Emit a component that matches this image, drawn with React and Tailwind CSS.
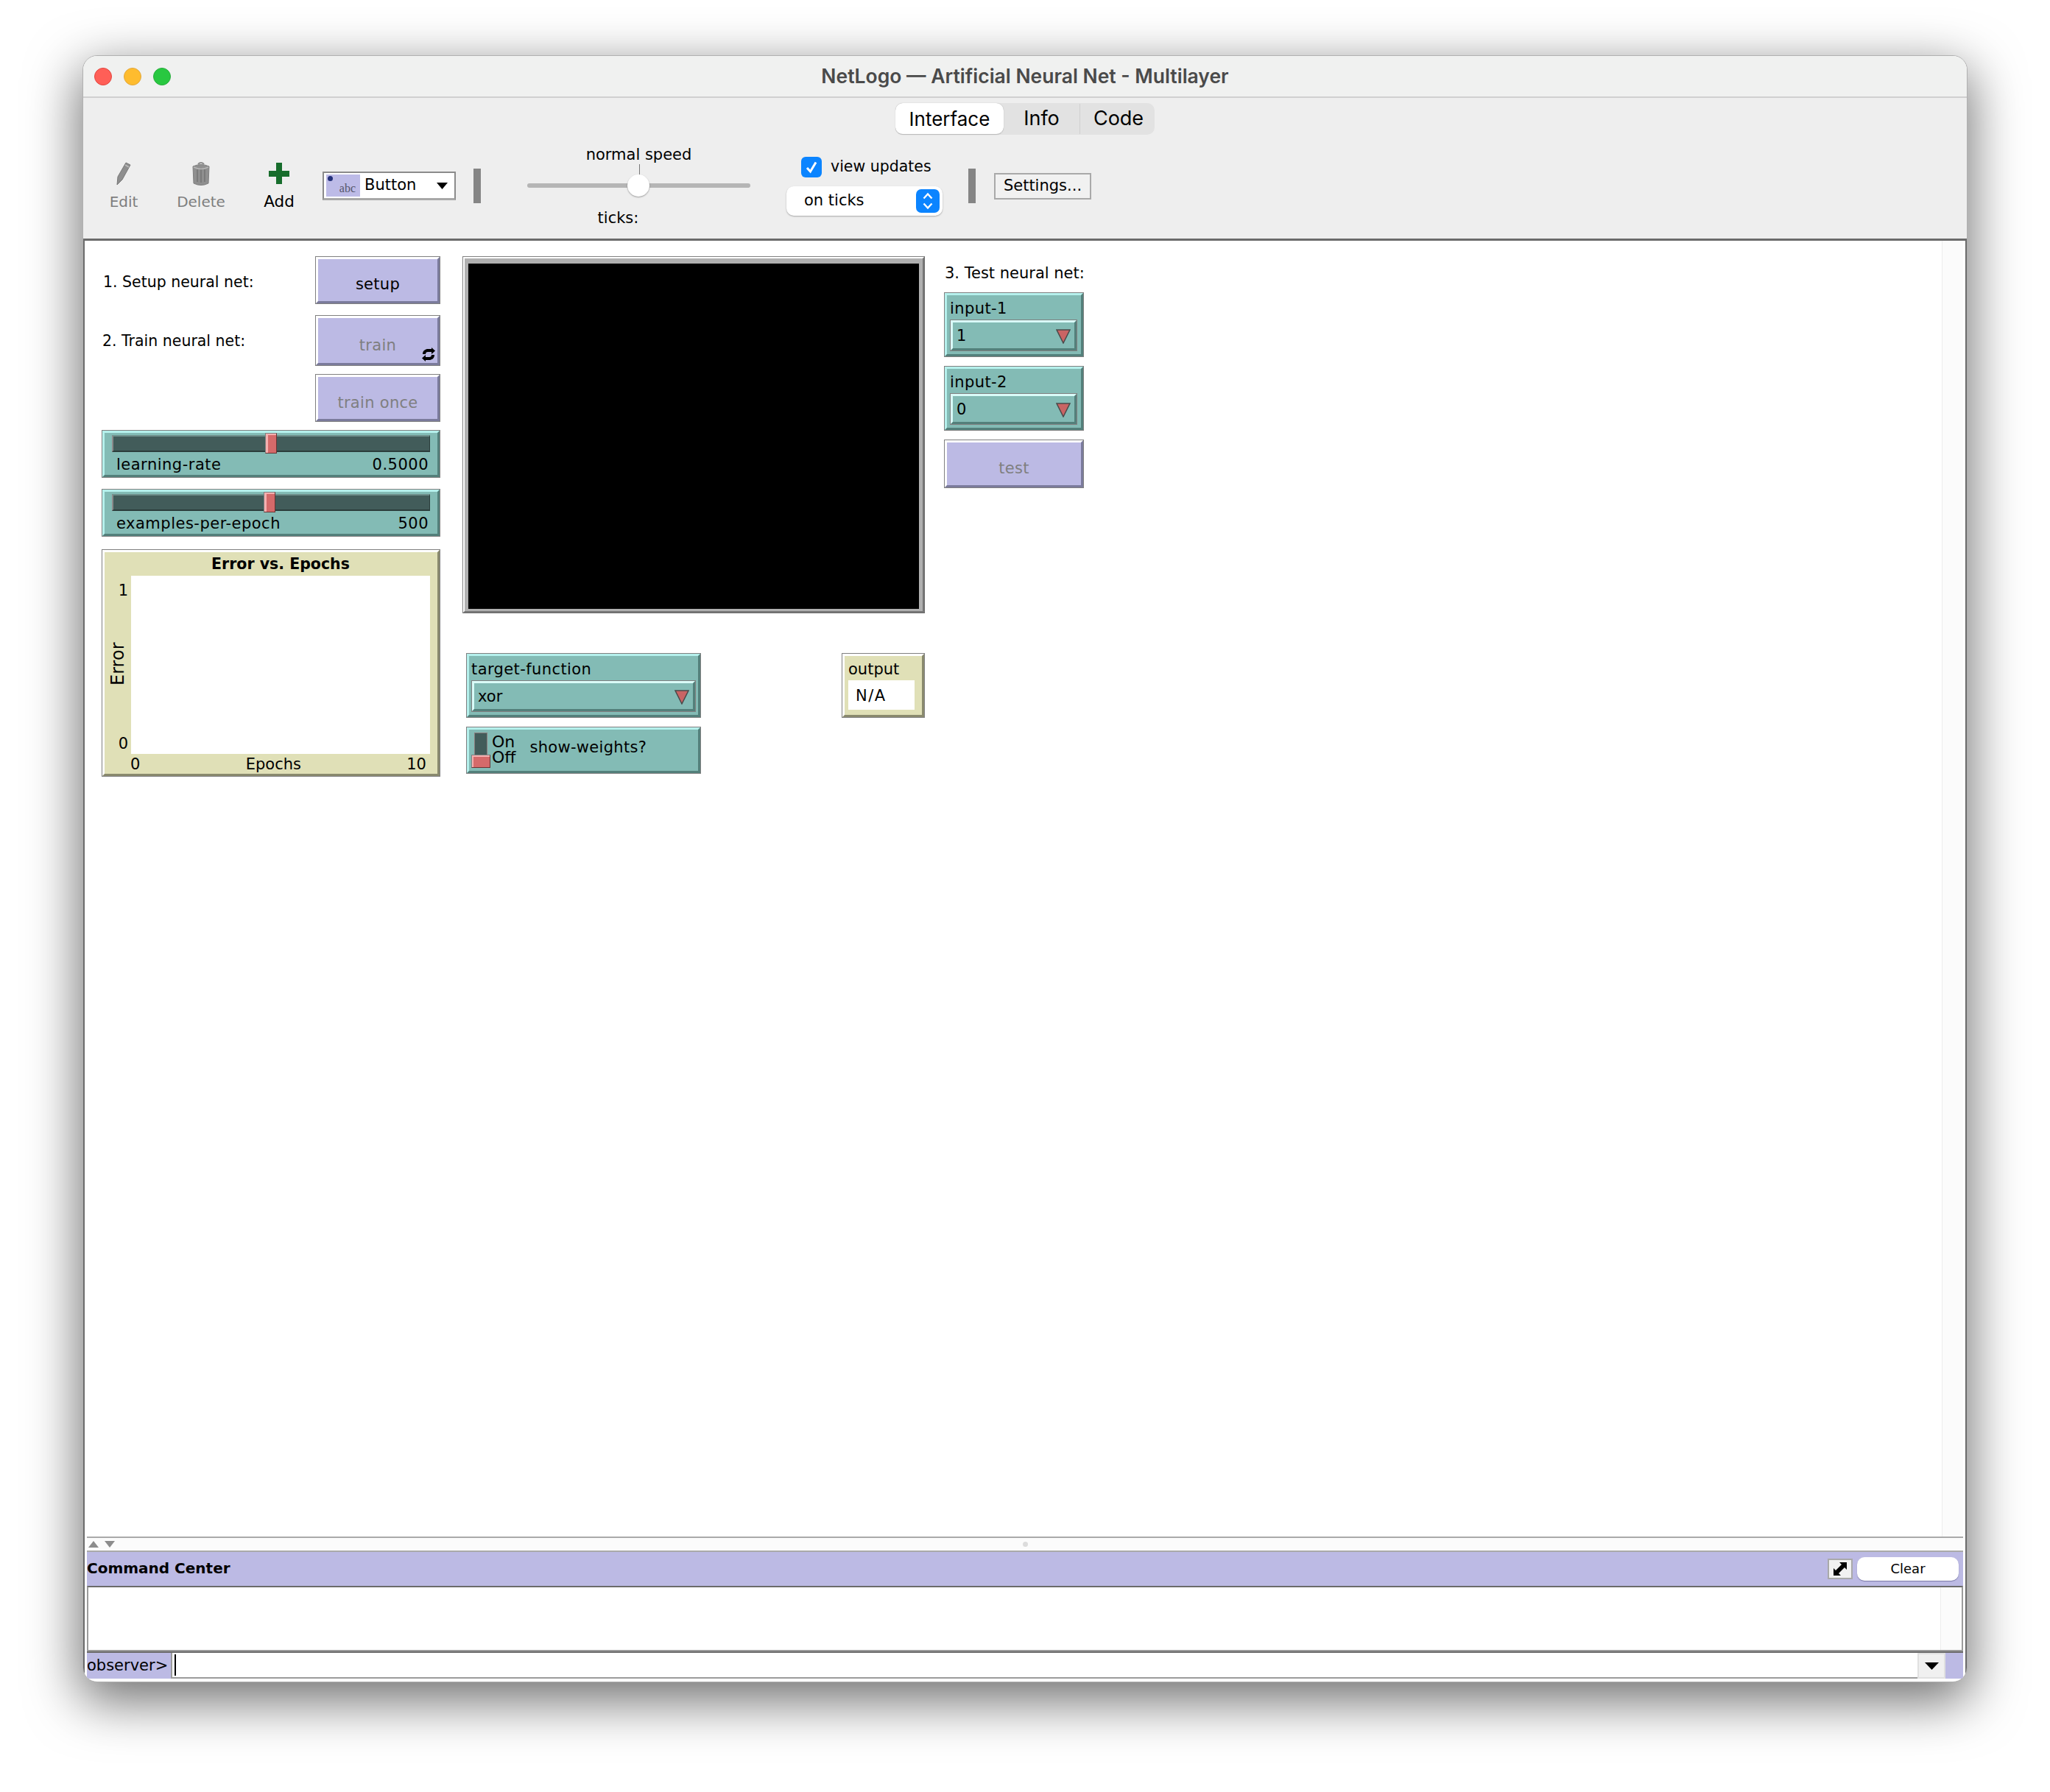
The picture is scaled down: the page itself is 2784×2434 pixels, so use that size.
import React from "react";

const ui = "font-['DejaVu_Sans',sans-serif]";
const mac = "font-['Inter',sans-serif]";

// NetLogo widgets all share the same 1px outline + 3px bevel
const Bevel = ({ className = "", light, dark, bg, children }) => (
  <div className={`absolute border border-[#808080] ${className}`}>
    <div className={`flex h-full w-full flex-col border-[3px] ${light} ${dark} ${bg}`}>{children}</div>
  </div>
);

const Button = ({ className, label, disabled, textClass = "", children }) => (
  <Bevel
    className={className}
    light="border-t-white border-l-white"
    dark="border-r-[#7b7b9c] border-b-[#7b7b9c]"
    bg="bg-[#bcbae4]"
  >
    <div className={`relative flex flex-1 items-center justify-center text-[21px] tracking-[0.3px] ${textClass} ${disabled ? "text-[#7f7f80]" : "text-black"}`}>
      {label}
      {children}
    </div>
  </Bevel>
);

const Slider = ({ className, label, value, thumbClass }) => (
  <Bevel
    className={className}
    light="border-t-[#b5f0ec] border-l-[#b5f0ec]"
    dark="border-r-[#53807b] border-b-[#53807b]"
    bg="bg-[#83bbb5]"
  >
    <div className="relative mx-[10px] mt-[3px] h-[23px] border-t-2 border-l-2 border-b-2 border-r border-t-[#6f8f8b] border-l-[#8b8b8b] border-b-[#2b3d3b] border-r-[#2b3d3b] bg-[#425c5a]">
      <div className={`absolute top-[-5px] h-[28px] w-[16px] border border-[#7f7f7f] border-r-[#6a3434] border-b-[#6a3434] bg-[#d56a6a] shadow-[inset_3px_2px_0_#f4b0b0] ${thumbClass}`} />
    </div>
    <div className="mt-[4px] flex justify-between pl-[16px] pr-[12px] text-[21px] leading-[26px] tracking-[0.5px] text-black">
      <span>{label}</span>
      <span>{value}</span>
    </div>
  </Bevel>
);

const Chooser = ({ className, label, value, padClass = "pl-[4px]", innerClass }) => (
  <Bevel
    className={className}
    light="border-t-[#b5f0ec] border-l-[#b5f0ec]"
    dark="border-r-[#53807b] border-b-[#53807b]"
    bg="bg-[#83bbb5]"
  >
    <div className={`h-[33px] text-[21px] leading-[36px] tracking-[0.4px] text-black ${padClass}`}>{label}</div>
    <div className={`h-[43px] border border-[#808080] ${innerClass}`}>
      <div className="flex h-full items-center justify-between border-[3px] border-t-[#d9fbf8] border-l-[#d9fbf8] border-r-[#53807b] border-b-[#53807b] pl-[5px] pr-[5px] pt-[2px] text-[21px] text-black">
        <span>{value}</span>
        <svg width="20" height="20" viewBox="0 0 20 20">
          <polygon points="1,1 19,1 10,19" fill="#c96464" stroke="#4a4a4a" strokeWidth="1.5" />
        </svg>
      </div>
    </div>
  </Bevel>
);

const Separator = ({ className }) => <div className={`h-[47px] w-[10px] bg-[#858585] ${className}`} />;

const PencilIcon = () => (
  <svg width="20" height="32" viewBox="0 0 20 32">
    <path d="M13 1 L19 4 L8 24 L1 31 L2 20 Z" fill="#8e8e8e" stroke="#777" strokeWidth="1" />
    <path d="M12 4 L17 7" stroke="#bbb" strokeWidth="1.5" />
  </svg>
);

const TrashIcon = () => (
  <svg width="24" height="32" viewBox="0 0 24 32">
    <path d="M8 3 Q12 -1 16 3" fill="none" stroke="#8a8a8a" strokeWidth="2" />
    <path d="M1 6 Q12 1 23 6 L22 29 Q12 34 2 29 Z" fill="#8f8f8f" stroke="#808080" />
    <path d="M7 10V27M12 10V28M17 10V27" stroke="#737373" strokeWidth="1.5" />
    <path d="M2 7 Q12 12 22 7" fill="none" stroke="#b4b4b4" strokeWidth="1.5" />
  </svg>
);

// the two curled arrows in the corner of a forever button
const ForeverIcon = () => (
  <svg className="absolute left-[141px] top-[40px]" width="18" height="19" viewBox="0 0 18 19">
    <path d="M1 9C1 4 5 2 8 2H13V0L18 4.5L13 9V6H8C6 6 5 7 5 9Z" fill="#000" />
    <path d="M17 10C17 15 13 17 10 17H5V19L0 14.5L5 10V13H10C12 13 13 12 13 10Z" fill="#000" />
  </svg>
);

const App = () => {
  return (
    <div className="min-h-screen bg-white pl-[112px] pt-[75px]">
      <div className={`flex h-[2210px] w-[2560px] flex-col overflow-hidden rounded-[20px] border border-[#b0b0b0] bg-white shadow-[0_22px_70px_4px_rgba(0,0,0,0.56)] ${ui}`}>
        {/* Title bar */}
        <div className="relative flex h-[57px] shrink-0 items-center justify-center border-b-2 border-[#d0d0d0] bg-[#f0f1f0]">
          <div className="absolute left-[15px] top-[16px] flex gap-[16px]">
            <div className="h-[24px] w-[24px] rounded-full border border-[#e2463f] bg-[#ff5f57]" />
            <div className="h-[24px] w-[24px] rounded-full border border-[#e1a73e] bg-[#febc2e]" />
            <div className="h-[24px] w-[24px] rounded-full border border-[#2aac3e] bg-[#28c840]" />
          </div>
          <span className={`text-[26.5px] font-semibold text-[#4a4a4a] ${mac}`}>NetLogo — Artificial Neural Net - Multilayer</span>
        </div>

        {/* Toolbar */}
        <div className="flex h-[191px] shrink-0 flex-col bg-[#eeeeee]">
          <div className="flex justify-center pt-[7px]">
            <div className={`flex h-[43px] w-[352px] items-center rounded-[10px] bg-[#e2e2e2] text-[26px] text-black ${mac}`}>
              <div className="flex h-full w-[147px] items-center justify-center rounded-[10px] border-b border-[#bdbdbd] bg-white shadow-[0_0_1px_#999]">Interface</div>
              <div className="w-[104px] border-r border-[#d0d0d0] text-center text-[27px]">Info</div>
              <div className="flex-1 pl-[3px] text-center text-[27px]">Code</div>
            </div>
          </div>

          <div className="flex flex-1 items-center pb-[2px] pl-[15px] text-[20px]">
            <div className="flex w-[80px] flex-col items-center gap-[10px] text-[#7e7e7e]">
              <PencilIcon />
              <span className="leading-[24px]">Edit</span>
            </div>
            <div className="ml-[25px] flex w-[80px] flex-col items-center gap-[10px] text-[#7e7e7e]">
              <TrashIcon />
              <span className="leading-[24px]">Delete</span>
            </div>
            <div className="ml-[26px] flex w-[80px] flex-col items-center gap-[10px] text-black">
              <svg width="28" height="32" viewBox="0 0 28 32">
                <path d="M10 3H18V14H28V22H18V32H10V22H0V14H10Z" fill="#176d2c" transform="translate(0 -2)" />
              </svg>
              <span className="text-[21.5px] leading-[24px]">Add</span>
            </div>

            <div className="ml-[19px] flex h-[39px] w-[181px] items-center border-2 border-[#8b8b8b] border-b-[3px] border-b-[#a8a8a8] bg-white pl-[3px] text-[21px] text-black">
              <div className="relative flex h-[30px] w-[46px] items-end justify-end bg-[#bdbbe7] pr-[6px]">
                <div className="absolute left-[2px] top-[2px] h-[7px] w-[7px] rounded-full bg-[#23307a]" />
                <span className="font-['Liberation_Serif',serif] text-[16px] leading-[22px] text-[#55556a]">abc</span>
              </div>
              <span className="ml-[6px] flex-1">Button</span>
              <svg className="mr-[9px]" width="15" height="9" viewBox="0 0 15 9">
                <polygon points="0,0 15,0 7.5,9" fill="#000" />
              </svg>
            </div>

            <Separator className="ml-[24px]" />

            {/* Speed slider */}
            <div className="ml-[63px] flex w-[303px] flex-col items-center text-[21px] text-black">
              <span className="h-[26px] leading-[26px]">normal speed</span>
              <div className="ml-[1px] h-[14px] w-[1px] bg-[#777]" />
              <div className="relative h-[30px] w-full">
                <div className="absolute left-0 right-0 top-[12px] h-[6px] rounded-full bg-[#b5b5b5]" />
                <div className="absolute left-[136px] top-0 h-[30px] w-[30px] rounded-full bg-white shadow-[0_1px_2px_rgba(0,0,0,0.35)]" />
              </div>
              <span className="mr-[56px] mt-[16px] h-[26px] leading-[26px]">ticks:</span>
            </div>

            {/* View updates */}
            <div className="ml-[49px] flex w-[212px] flex-col text-[21px] text-black">
              <div className="ml-[20px] flex h-[28px] items-center gap-[12px]">
                <div className="flex h-[28px] w-[28px] items-center justify-center rounded-[6px] bg-[#0b84ff]">
                  <svg width="20" height="20" viewBox="0 0 20 20">
                    <path d="M4 11L8.5 16L16 3.5" fill="none" stroke="#fff" strokeWidth="3" />
                  </svg>
                </div>
                <span className="text-[20.5px]">view updates</span>
              </div>
              <div className="mt-[12px] flex h-[40px] items-center justify-between rounded-[10px] bg-white pl-[24px] pr-[4px] shadow-[0_1px_2px_rgba(0,0,0,0.3)]">
                <span>on ticks</span>
                <div className="flex h-[32px] w-[32px] items-center justify-center rounded-[7px] bg-[#0b84ff]">
                  <svg width="16" height="26" viewBox="0 0 16 26">
                    <path d="M2.5 9.5L8 3.5L13.5 9.5M2.5 16.5L8 22.5L13.5 16.5" fill="none" stroke="#fff" strokeWidth="2.4" />
                  </svg>
                </div>
              </div>
            </div>

            <Separator className="ml-[35px]" />

            <div className="ml-[25px] flex h-[36px] w-[132px] items-center justify-center border-2 border-[#a9a9a9] bg-[#f1f1f1] text-[21px] text-black">Settings...</div>
          </div>
        </div>

        {/* Everything under the toolbar */}
        <div className="flex min-h-0 flex-1 flex-col border-x-2 border-t-[3px] border-[#6b6b6b]">
          <div className="relative h-[1760px] shrink-0 bg-white text-black">
            <div className="absolute bottom-0 right-[3px] top-0 w-[29px] border-l border-[#ececec] bg-[#fbfbfb]" />

            <div className="absolute left-[25px] top-[41px] text-[20.5px] leading-[30px]">1. Setup neural net:</div>
            <div className="absolute left-[24px] top-[121px] text-[20.5px] leading-[30px]">2. Train neural net:</div>
            <div className="absolute left-[1168px] top-[29px] text-[21px] leading-[30px]">3. Test neural net:</div>

            <Button className="left-[313px] top-[21px] h-[65px] w-[170px]" label="setup" textClass="pt-[12px]" />
            <Button className="left-[313px] top-[101px] h-[69px] w-[170px]" label="train" disabled textClass="pt-[14px]">
              <ForeverIcon />
            </Button>
            <Button className="left-[313px] top-[181px] h-[65px] w-[170px]" label="train once" disabled textClass="pt-[14px]" />

            <Slider className="left-[23px] top-[257px] h-[65px] w-[460px]" label="learning-rate" value="0.5000" thumbClass="left-[206px]" />
            <Slider className="left-[23px] top-[337px] h-[65px] w-[460px]" label="examples-per-epoch" value="500" thumbClass="left-[204px]" />

            {/* Plot */}
            <Bevel
              className="left-[23px] top-[419px] h-[309px] w-[460px]"
              light="border-t-white border-l-white"
              dark="border-r-[#8a8a6e] border-b-[#8a8a6e]"
              bg="bg-[#e0e0b7]"
            >
              <div className="grid h-full grid-cols-[36px_406px_1fr] grid-rows-[32px_242px_1fr] text-[21px] leading-[26px]">
                <div className="col-span-3 pl-[26px] text-center text-[20.5px] font-bold leading-[32px]">Error vs. Epochs</div>
                <div className="relative flex flex-col items-end justify-between pb-[1px] pr-[4px] pt-[7px]">
                  <span>1</span>
                  <span className="absolute left-[5px] top-[90px] h-[60px] w-[26px] rotate-180 text-center text-[24px] [writing-mode:vertical-rl]">Error</span>
                  <span>0</span>
                </div>
                <div className="bg-white" />
                <div />
                <div className="col-span-3 flex w-[437px] justify-between pl-[35px] pt-[1px]">
                  <span>0</span>
                  <span>Epochs</span>
                  <span>10</span>
                </div>
              </div>
            </Bevel>

            {/* View */}
            <div className="absolute left-[513px] top-[21px] h-[485px] w-[628px] border border-[#808080] border-r-[#6a6a6a] border-b-[#6a6a6a]">
              <div className="h-full w-full border-[2px] border-t-white border-l-white border-r-[#777] border-b-[#777] bg-[#b0b0b0] pb-[3px] pl-[5px] pr-[5px] pt-[7px]">
                <div className="h-full w-full bg-black" />
              </div>
            </div>

            <Chooser className="left-[518px] top-[560px] h-[88px] w-[319px]" label="target-function" value="xor" padClass="pl-[3px]" innerClass="mx-[3px]" />

            {/* Switch */}
            <Bevel
              className="left-[518px] top-[660px] h-[64px] w-[319px]"
              light="border-t-[#b5f0ec] border-l-[#b5f0ec]"
              dark="border-r-[#53807b] border-b-[#53807b]"
              bg="bg-[#83bbb5]"
            >
              <div className="flex h-full items-center pl-[3px] text-[21px] text-black">
                <div className="relative h-[48px] w-[26px]">
                  <div className="absolute left-[4px] top-0 h-[32px] w-[18px] border border-[#8b7d7d] bg-[#425c5a]" />
                  <div className="absolute bottom-0 left-0 h-[18px] w-[26px] border border-[#7f7f7f] border-r-[#6a3434] border-b-[#6a3434] bg-[#d56a6a] shadow-[inset_2px_2px_0_#f4b0b0]" />
                </div>
                <div className="ml-[2px] flex flex-col pb-[2px] text-[22px] leading-[21px]">
                  <span>On</span>
                  <span>Off</span>
                </div>
                <span className="ml-[19px] pb-[6px] tracking-[0.3px]">show-weights?</span>
              </div>
            </Bevel>

            {/* Monitor */}
            <Bevel
              className="left-[1028px] top-[560px] h-[88px] w-[113px]"
              light="border-t-white border-l-white"
              dark="border-r-[#8a8a6e] border-b-[#8a8a6e]"
              bg="bg-[#e0e0b7]"
            >
              <div className="h-[33px] pl-[5px] text-[21px] leading-[36px]">output</div>
              <div className="ml-[5px] flex h-[40px] w-[90px] items-center bg-white pl-[10px] pt-[3px] text-[21px] tracking-[1.5px]">N/A</div>
            </Bevel>

            <Chooser className="left-[1167px] top-[70px] h-[88px] w-[190px]" label="input-1" value="1" innerClass="ml-[4px] mr-[5px]" />
            <Chooser className="left-[1167px] top-[170px] h-[88px] w-[190px]" label="input-2" value="0" innerClass="ml-[4px] mr-[5px]" />
            <Button className="left-[1167px] top-[270px] h-[66px] w-[190px]" label="test" disabled textClass="pt-[14px]" />
          </div>

          {/* Command center */}
          <div className="mx-[3px] flex min-h-0 flex-1 flex-col text-black">
            <div className="relative h-[21px] shrink-0 border-y-2 border-[#aaaaaa] bg-[#fbfbfb]">
              <div className="flex h-full items-center gap-[8px] pl-[2px]">
                <svg width="14" height="9" viewBox="0 0 14 9"><polygon points="7,0 14,9 0,9" fill="#8c8c8c" /></svg>
                <svg width="14" height="9" viewBox="0 0 14 9"><polygon points="0,0 14,0 7,9" fill="#8c8c8c" /></svg>
              </div>
              <div className="absolute left-[1271px] top-[5px] h-[7px] w-[7px] rounded-full bg-[#dcdcdc]" />
            </div>

            <div className="flex h-[46px] shrink-0 items-center bg-[#bcbae4]">
              <span className="flex-1 pb-[2px] text-[20px] font-bold">Command Center</span>
              <div className="flex h-[28px] w-[34px] items-center justify-center border-2 border-[#a9a9a9] bg-[#f1f1f1]">
                <svg width="20" height="20" viewBox="0 0 20 20">
                  <path d="M9 1H19V11L16 8L8 16L11 19H1V9L4 12L12 4Z" fill="#000" />
                </svg>
              </div>
              <div className="ml-[6px] mr-[6px] flex h-[32px] w-[138px] items-center justify-center rounded-[10px] bg-white pb-[2px] text-[18px] shadow-[0_1px_1px_rgba(60,60,110,0.5)]">Clear</div>
            </div>

            <div className="flex h-[89px] shrink-0 justify-end border-x-2 border-b-2 border-t-2 border-x-[#9b9b9b] border-b-[#9b9b9b] border-t-[#6b6b6b] bg-white">
              <div className="w-[29px] border-l border-[#ececec] bg-[#fbfbfb]" />
            </div>

            <div className="flex h-[37px] shrink-0 border-t-2 border-[#6b6b6b] bg-[#bcbae4]">
              <span className="flex w-[114px] items-center text-[21px]">observer&gt;</span>
              <div className="flex w-[371px] flex-1 border-b-2 border-l-2 border-[#9b9b9b] bg-white pl-[3px]">
                <div className="my-[2px] w-[2px] bg-black" />
              </div>
              <div className="flex w-[38px] items-center justify-center border-2 border-[#e0e0e0] bg-[#f0f0f0]">
                <svg width="19" height="10" viewBox="0 0 19 10"><polygon points="0,0 19,0 9.5,10" fill="#000" /></svg>
              </div>
              <div className="w-[24px]" />
            </div>
          </div>
        </div>
      </div>
    </div>
  );
};

export default App;
